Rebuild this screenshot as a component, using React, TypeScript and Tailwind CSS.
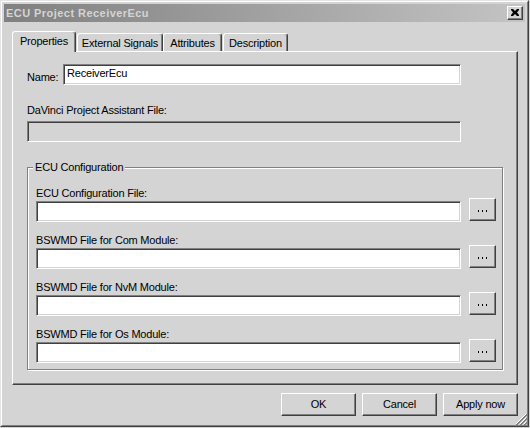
import React from "react";

function Field({ className, value }: { className: string; value?: string }) {
  return (
    <div
      className={`h-[21px] border border-t-[#808080] border-l-[#808080] border-r-white border-b-white shadow-[inset_1px_1px_0_#404040,inset_-1px_-1px_0_#d4d4d4] px-[3px] pt-[2px] leading-[13px] whitespace-nowrap ${className}`}
    >
      {value}
    </div>
  );
}

function Btn({ className, children }: { className: string; children: React.ReactNode }) {
  return (
    <div
      className={`flex items-center justify-center bg-[#d4d4d4] border border-t-white border-l-white border-r-[#404040] border-b-[#404040] shadow-[inset_-1px_-1px_0_#808080] leading-[13px] ${className}`}
    >
      {children}
    </div>
  );
}

function Dots() {
  return (
    <svg width="11" height="2" viewBox="0 0 11 2" className="mt-[3px]">
      <rect x="1" y="0" width="1" height="2" fill="#000" />
      <rect x="5" y="0" width="1" height="2" fill="#000" />
      <rect x="9" y="0" width="1" height="2" fill="#000" />
    </svg>
  );
}

function FileRow({ label, first }: { label: string; first?: boolean }) {
  return (
    <div className={first ? "flex flex-col" : "flex flex-col mt-[13px]"}>
      <div className="leading-[10px] h-[10px] whitespace-nowrap">{label}</div>
      <div className="flex items-start">
        <Field className="w-[425px] mt-[3px] bg-white" />
        <Btn className="ml-[8px] w-[27px] h-[23px]">
          <Dots />
        </Btn>
      </div>
    </div>
  );
}

export default function App() {
  return (
    <div className="w-[530px] h-[428px] bg-[#d4d4d4] font-['Liberation_Sans',Arial,sans-serif] text-[11px] tracking-[-0.2px] text-black">
      <div className="relative w-[529px] h-[427px] border border-t-[#e4e4e4] border-l-[#e4e4e4] border-r-[#404040] border-b-[#404040]">
        <div className="h-full border border-t-white border-l-white border-r-[#808080] border-b-[#808080] p-[2px] flex flex-col">
          {/* Title bar */}
          <div className="h-[18px] bg-linear-to-r from-[#808080] to-[#c4c4c4] flex items-center justify-between pl-[2px] pr-[2px]">
            <span className="font-bold text-[11px] tracking-[0.45px] text-[#d4d4d4] leading-[13px] whitespace-nowrap">
              ECU Project ReceiverEcu
            </span>
            <div className="w-[16px] h-[14px] bg-[#d4d4d4] border border-t-white border-l-white border-r-[#404040] border-b-[#404040] shadow-[inset_-1px_-1px_0_#808080] flex items-center justify-center">
              <svg width="8" height="7" viewBox="0 0 8 7" className="mb-[1px]">
                <path d="M0 0h2l2 2 2-2h2v1L6 3.5 8 6v1H6L4 5 2 7H0V6l2-2.5L0 1z" fill="#000" />
              </svg>
            </div>
          </div>

          {/* Content */}
          <div className="pl-[8px] flex flex-col w-[514px]">
            {/* Tabs */}
            <div className="mt-[9px] h-[20px] flex items-end">
              <div className="relative z-10 -mb-px h-[21px] w-[64px] bg-[#d4d4d4] border-t border-l border-r border-t-white border-l-white border-r-[#404040] shadow-[inset_-1px_0_0_#808080] rounded-t-[3px] text-center pt-[3px] leading-[13px]">
                Properties
              </div>
              <div className="ml-[1px] h-[18px] w-[86px] border-t border-l border-r border-t-white border-l-white border-r-[#404040] shadow-[inset_-1px_0_0_#808080] rounded-t-[3px] text-center pt-[3px] leading-[13px]">
                External Signals
              </div>
              <div className="h-[18px] w-[59px] border-t border-l border-r border-t-white border-l-white border-r-[#404040] shadow-[inset_-1px_0_0_#808080] rounded-t-[3px] text-center pt-[3px] leading-[13px]">
                Attributes
              </div>
              <div className="ml-[1px] h-[18px] w-[65px] border-t border-l border-r border-t-white border-l-white border-r-[#404040] shadow-[inset_-1px_0_0_#808080] rounded-t-[3px] text-center pt-[3px] leading-[13px]">
                Description
              </div>
            </div>

            {/* Panel */}
            <div className="w-[506px] h-[334px] border border-t-white border-l-white border-r-[#404040] border-b-[#404040] shadow-[inset_-1px_-1px_0_#808080] pl-[14px] pt-[12px] flex flex-col">
              <div className="flex items-start">
                <div className="w-[36px] mt-[7px] leading-[13px]">Name:</div>
                <Field className="w-[398px] bg-white" value="ReceiverEcu" />
              </div>
              <div className="mt-[19px] leading-[13px] whitespace-nowrap">DaVinci Project Assistant File:</div>
              <Field className="mt-[4px] w-[434px] bg-[#d4d4d4]" />

              {/* Group box */}
              <div className="relative mt-[25px] w-[476px] h-[203px] border border-[#808080] shadow-[inset_1px_1px_0_white,1px_1px_0_white] pl-[8px] pt-[20px] flex flex-col">
                <div className="absolute -top-[7px] left-[5px] px-[2px] bg-[#d4d4d4] leading-[13px] whitespace-nowrap">
                  ECU Configuration
                </div>
                <FileRow label="ECU Configuration File:" first />
                <FileRow label="BSWMD File for Com Module:" />
                <FileRow label="BSWMD File for NvM Module:" />
                <FileRow label="BSWMD File for Os Module:" />
              </div>
            </div>

            {/* Bottom buttons */}
            <div className="w-[506px] mt-[8px] flex justify-end gap-[6px]">
              <Btn className="w-[75px] h-[23px]">OK</Btn>
              <Btn className="w-[75px] h-[23px]">Cancel</Btn>
              <Btn className="w-[75px] h-[23px]">Apply now</Btn>
            </div>
          </div>
        </div>

        {/* Resize grip */}
        <svg className="absolute right-[1px] bottom-[1px]" width="12" height="12" viewBox="0 0 12 12">
          <path d="M11 1L1 11M11 5L5 11M11 9L9 11" stroke="#ffffff" strokeWidth="1" />
          <path d="M12 1L1 12M12 2L2 12M12 5L5 12M12 6L6 12M12 9L9 12M12 10L10 12" stroke="#808080" strokeWidth="1" />
        </svg>
      </div>
    </div>
  );
}
